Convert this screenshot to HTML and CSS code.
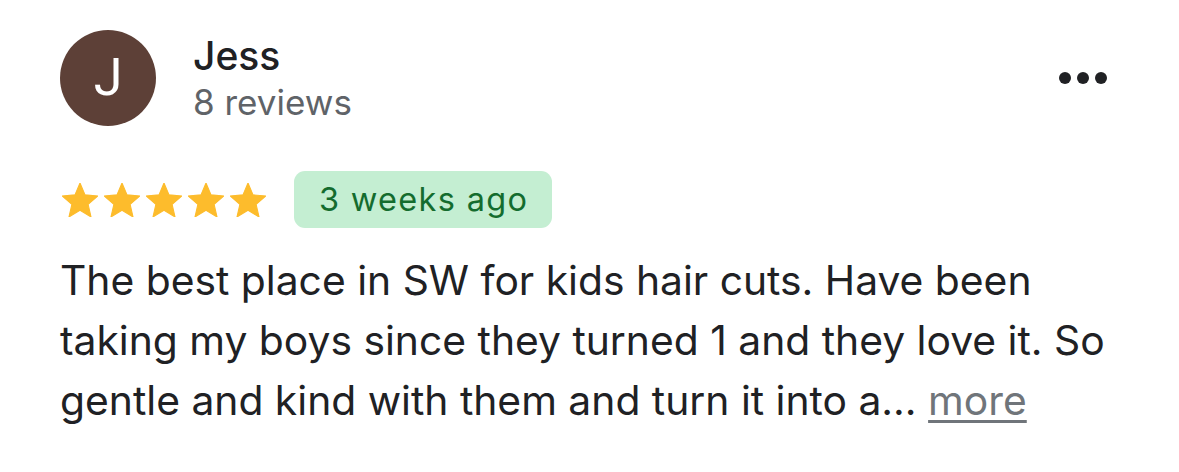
FILE: index.html
```html
<!DOCTYPE html>
<html>
<head>
<meta charset="utf-8">
<link rel="stylesheet" href="styles.css">
</head>
<body>
<div class="review">
  <div class="header">
    <div class="avatar">J</div>
    <div class="who">
      <div class="name">Jess</div>
      <div class="count">8 reviews</div>
    </div>
    <div class="menu"><span></span><span></span><span></span></div>
  </div>
  <div class="meta">
    <div class="stars">
      <svg viewBox="2 2 20 19"><path d="M12 17.27L18.18 21l-1.64-7.03L22 9.24l-7.19-.61L12 2 9.19 8.63 2 9.24l5.46 4.73L5.82 21z"/></svg>
      <svg viewBox="2 2 20 19"><path d="M12 17.27L18.18 21l-1.64-7.03L22 9.24l-7.19-.61L12 2 9.19 8.63 2 9.24l5.46 4.73L5.82 21z"/></svg>
      <svg viewBox="2 2 20 19"><path d="M12 17.27L18.18 21l-1.64-7.03L22 9.24l-7.19-.61L12 2 9.19 8.63 2 9.24l5.46 4.73L5.82 21z"/></svg>
      <svg viewBox="2 2 20 19"><path d="M12 17.27L18.18 21l-1.64-7.03L22 9.24l-7.19-.61L12 2 9.19 8.63 2 9.24l5.46 4.73L5.82 21z"/></svg>
      <svg viewBox="2 2 20 19"><path d="M12 17.27L18.18 21l-1.64-7.03L22 9.24l-7.19-.61L12 2 9.19 8.63 2 9.24l5.46 4.73L5.82 21z"/></svg>
    </div>
    <div class="badge">3 weeks ago</div>
  </div>
  <p class="text">The best place in SW for kids hair cuts. Have been taking my boys since they turned 1 and they love it. So gentle and kind with them and turn it into a… <span class="more">more</span></p>
</div>
</body>
</html>
```

FILE: styles.css
```css
html, body {
  margin: 0;
  padding: 0;
  background: #ffffff;
}
.review {
  padding: 30px 72px 0 60px;
  font-family: Inter, Roboto, "Liberation Sans", sans-serif;
  color: #202124;
}
.header {
  display: flex;
  align-items: flex-start;
}
.avatar {
  width: 96px;
  height: 96px;
  border-radius: 50%;
  background: #5d4037;
  color: #ffffff;
  font-family: Roboto, "Liberation Sans", sans-serif;
  font-size: 52px;
  line-height: 96px;
  text-align: center;
  flex: none;
}
.who {
  margin-left: 37px;
  padding-top: 2px;
}
.name {
  font-size: 39px;
  font-weight: 500;
  line-height: 48px;
  color: #202124;
}
.count {
  font-size: 35px;
  line-height: 44px;
  color: #5f6368;
}
.menu {
  margin-left: auto;
  margin-top: 42px;
  display: flex;
  gap: 6px;
}
.menu span {
  width: 12px;
  height: 12px;
  border-radius: 50%;
  background: #202124;
}
.meta {
  display: flex;
  align-items: center;
  margin-top: 45px;
}
.stars {
  display: flex;
  gap: 6px;
  margin-left: 2px;
}
.stars svg {
  width: 36px;
  height: 34px;
  fill: #fdbc2c;
  stroke: #fdbc2c;
  stroke-width: 0.6;
  stroke-linejoin: round;
}
.badge {
  margin-left: 28px;
  background: #c4eed2;
  color: #146c2e;
  border-radius: 11px;
  height: 57px;
  line-height: 57px;
  padding: 0 24px 0 25px;
  font-size: 32.5px;
  letter-spacing: 1.3px;
}
.text {
  margin: 22px -50px 0 0;
  font-size: 40.8px;
  line-height: 60px;
  color: #202124;
}
.more {
  color: #70757a;
  text-decoration: underline;
  text-decoration-thickness: 3px;
  text-underline-offset: 5px;
}
```
